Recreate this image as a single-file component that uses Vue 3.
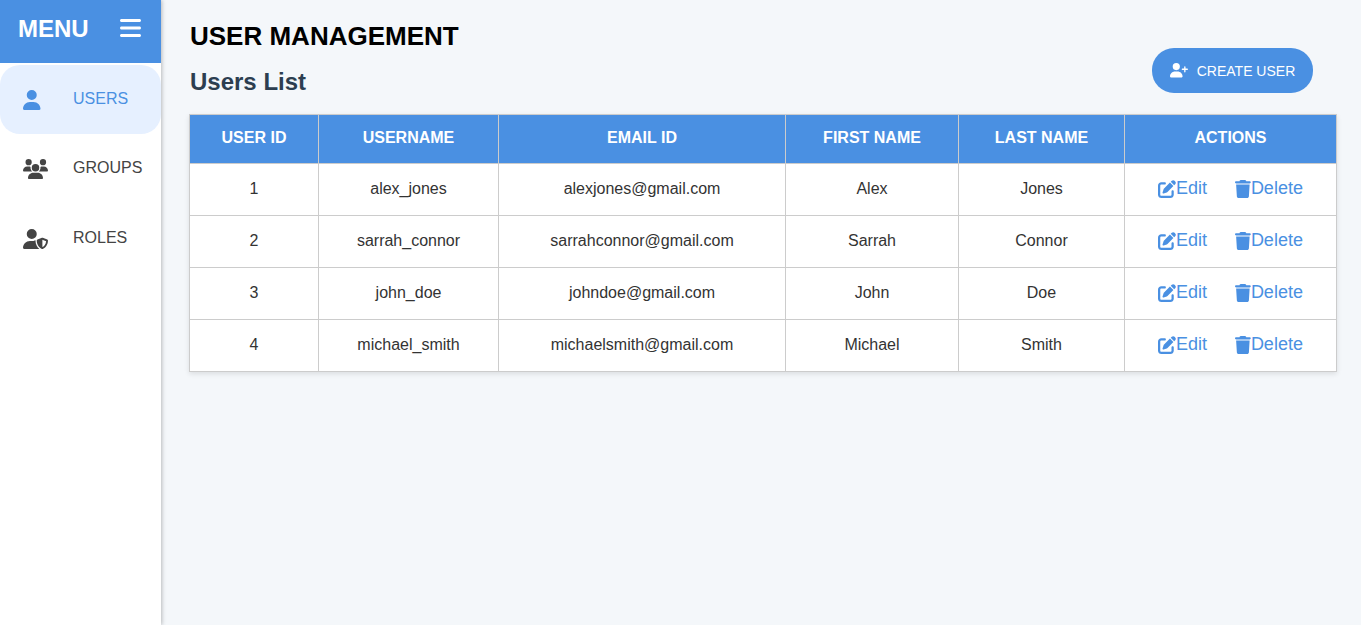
<script setup>
const icons = {
  user: { box: '0 0 448 512', d: 'M224 256A128 128 0 1 0 224 0a128 128 0 1 0 0 256zm-45.7 48C79.8 304 0 383.8 0 482.3C0 498.7 13.3 512 29.7 512H418.3c16.4 0 29.7-13.3 29.7-29.7C448 383.8 368.2 304 269.7 304H178.3z' },
  users: { box: '0 0 640 512', d: 'M144 0a80 80 0 1 1 0 160A80 80 0 1 1 144 0zM512 0a80 80 0 1 1 0 160A80 80 0 1 1 512 0zM0 298.7C0 239.8 47.8 192 106.7 192h42.7c15.9 0 31 3.5 44.6 9.7c-1.3 7.2-1.9 14.7-1.9 22.3c0 38.2 16.8 72.5 43.3 96c-.2 0-.4 0-.7 0H21.3C9.6 320 0 310.4 0 298.7zM405.3 320c-.2 0-.4 0-.7 0c26.6-23.5 43.3-57.8 43.3-96c0-7.6-.7-15-1.9-22.3c13.6-6.3 28.7-9.7 44.6-9.7h42.7C592.2 192 640 239.8 640 298.7c0 11.8-9.6 21.3-21.3 21.3H405.3zM224 224a96 96 0 1 1 192 0 96 96 0 1 1 -192 0zM128 485.3C128 411.7 187.7 352 261.3 352H378.7C452.3 352 512 411.7 512 485.3c0 14.7-11.9 26.7-26.7 26.7H154.7c-14.7 0-26.7-11.9-26.7-26.7z' },
  shield: { box: '0 0 640 512', d: 'M224 256A128 128 0 1 0 224 0a128 128 0 1 0 0 256zm-45.7 48C79.8 304 0 383.8 0 482.3C0 498.7 13.3 512 29.7 512H419.2c-54-42.9-99.2-116.7-99.2-216c0-2.5.8-4.7 1.1-7.2C304 294 287 304 269.7 304H178.3zM622.3 271.1l-115.2-45c-4.1-1.6-12.6-3.7-22.2 0l-115.2 45c-10.7 4.2-17.7 14-17.7 24.9 0 111.6 68.7 188.8 132.9 213.9 9.6 3.7 18 1.6 22.2 0C558.4 489.9 640 420.5 640 296c0-10.9-7-20.7-17.7-24.9zM496 462.4V273.3l95.5 37.3c-5.6 87.1-60.9 135.4-95.5 151.8z' },
  plus: { box: '0 0 640 512', d: 'M96 128a128 128 0 1 1 256 0A128 128 0 1 1 96 128zM0 482.3C0 383.8 79.8 304 178.3 304h91.4C368.2 304 448 383.8 448 482.3c0 16.4-13.3 29.7-29.7 29.7H29.7C13.3 512 0 498.7 0 482.3zM504 312V248H440c-13.3 0-24-10.7-24-24s10.7-24 24-24h64V136c0-13.3 10.7-24 24-24s24 10.7 24 24v64h64c13.3 0 24 10.7 24 24s-10.7 24-24 24H552v64c0 13.3-10.7 24-24 24s-24-10.7-24-24z' },
  edit: { box: '0 0 512 512', d: 'M471.6 21.7c-21.9-21.9-57.3-21.9-79.2 0L362.3 51.7l97.9 97.9 30.1-30.1c21.9-21.9 21.9-57.3 0-79.2L471.6 21.7zm-299.2 220c-6.1 6.1-10.8 13.6-13.5 21.9l-29.6 88.8c-2.9 8.6-.6 18.1 5.8 24.6s15.9 8.7 24.6 5.8l88.8-29.6c8.2-2.7 15.7-7.4 21.9-13.5L437.7 172.3 339.7 74.3 172.4 241.7zM96 64C43 64 0 107 0 160V416c0 53 43 96 96 96H352c53 0 96-43 96-96V320c0-17.7-14.3-32-32-32s-32 14.3-32 32v96c0 17.7-14.3 32-32 32H96c-17.7 0-32-14.3-32-32V160c0-17.7 14.3-32 32-32h96c17.7 0 32-14.3 32-32s-14.3-32-32-32H96z' },
  trash: { box: '0 0 448 512', d: 'M135.2 17.7L128 32H32C14.3 32 0 46.3 0 64S14.3 96 32 96H416c17.7 0 32-14.3 32-32s-14.3-32-32-32H320l-7.2-14.3C307.4 6.8 296.3 0 284.2 0H163.8c-12.1 0-23.2 6.8-28.6 17.7zM416 128H32L53.2 467c1.6 25.3 22.6 45 47.9 45H346.9c25.3 0 46.3-19.7 47.9-45L416 128z' },
  bars: { box: '0 0 448 512', d: 'M0 96C0 78.3 14.3 64 32 64H416c17.7 0 32 14.3 32 32s-14.3 32-32 32H32C14.3 128 0 113.7 0 96zM0 256c0-17.7 14.3-32 32-32H416c17.7 0 32 14.3 32 32s-14.3 32-32 32H32c-17.7 0-32-14.3-32-32zM448 416c0 17.7-14.3 32-32 32H32c-17.7 0-32-14.3-32-32s14.3-32 32-32H416c17.7 0 32 14.3 32 32z' },
}

const menu = [
  { label: 'USERS', icon: icons.user, active: true },
  { label: 'GROUPS', icon: icons.users },
  { label: 'ROLES', icon: icons.shield },
]

const columns = [
  { label: 'USER ID', width: 129 },
  { label: 'USERNAME', width: 180 },
  { label: 'EMAIL ID', width: 287 },
  { label: 'FIRST NAME', width: 173 },
  { label: 'LAST NAME', width: 166 },
  { label: 'ACTIONS', width: 212 },
]

const users = [
  { id: 1, username: 'alex_jones', email: 'alexjones@gmail.com', first: 'Alex', last: 'Jones' },
  { id: 2, username: 'sarrah_connor', email: 'sarrahconnor@gmail.com', first: 'Sarrah', last: 'Connor' },
  { id: 3, username: 'john_doe', email: 'johndoe@gmail.com', first: 'John', last: 'Doe' },
  { id: 4, username: 'michael_smith', email: 'michaelsmith@gmail.com', first: 'Michael', last: 'Smith' },
]
</script>

<template>
  <div class="page">
    <aside class="sidebar">
      <div class="brand">
        <span class="brand-name">MENU</span>
        <svg :viewBox="icons.bars.box" class="burger"><path :d="icons.bars.d" fill="currentColor" /></svg>
      </div>
      <nav class="nav">
        <a v-for="m in menu" :key="m.label" class="nav-item" :class="{ active: m.active }">
          <span class="nav-icon">
            <svg :viewBox="m.icon.box" class="nav-svg"><path :d="m.icon.d" fill="currentColor" /></svg>
          </span>
          <span class="nav-label">{{ m.label }}</span>
        </a>
      </nav>
    </aside>

    <main class="main">
      <div class="head">
        <div class="titles">
          <h1 class="title">USER MANAGEMENT</h1>
          <h2 class="subtitle">Users List</h2>
        </div>
        <button class="create">
          <svg :viewBox="icons.plus.box" class="create-svg"><path :d="icons.plus.d" fill="currentColor" /></svg>
          CREATE USER
        </button>
      </div>

      <table class="table">
        <colgroup>
          <col v-for="c in columns" :key="c.label" :width="c.width" />
        </colgroup>
        <thead>
          <tr>
            <th v-for="c in columns" :key="c.label">{{ c.label }}</th>
          </tr>
        </thead>
        <tbody>
          <tr v-for="u in users" :key="u.id">
            <td>{{ u.id }}</td>
            <td>{{ u.username }}</td>
            <td>{{ u.email }}</td>
            <td>{{ u.first }}</td>
            <td>{{ u.last }}</td>
            <td>
              <div class="actions">
                <a class="action">
                  <svg :viewBox="icons.edit.box" class="action-svg"><path :d="icons.edit.d" fill="currentColor" /></svg>Edit
                </a>
                <a class="action">
                  <svg :viewBox="icons.trash.box" class="action-svg"><path :d="icons.trash.d" fill="currentColor" /></svg>Delete
                </a>
              </div>
            </td>
          </tr>
        </tbody>
      </table>
    </main>
  </div>
</template>

<style>
html, body {
  margin: 0;
  background: #f4f7fa;
}
</style>

<style scoped>
.page {
  display: flex;
  min-height: 625px;
  font-family: "Liberation Sans", Arial, sans-serif;
}
.sidebar {
  width: 161px;
  flex: none;
  background: #fff;
  box-shadow: 1px 0 4px rgba(0, 0, 0, 0.25);
}
.brand {
  height: 63px;
  background: #4a90e2;
  color: #fff;
  display: flex;
  align-items: flex-start;
  justify-content: space-between;
  padding: 17px 20px 0 18px;
  box-sizing: border-box;
}
.brand-name {
  font-size: 24px;
  font-weight: 700;
  line-height: 24px;
}
.burger {
  height: 24px;
  margin-top: -1px;
}
.nav {
  padding-top: 2px;
}
.nav-item {
  height: 70px;
  display: flex;
  align-items: center;
  padding-left: 23px;
  font-size: 16px;
  color: #444;
  border-radius: 20px;
}
.nav-item.active {
  height: 69px;
  background: #e6f0ff;
  color: #4a90e2;
}
.nav-icon {
  width: 50px;
  display: flex;
}
.nav-svg {
  height: 20px;
}
.nav-label {
  position: relative;
  top: -1px;
}
.main {
  flex: 1;
  padding: 20px 24px 0 28px;
  min-width: 0;
}
.head {
  display: flex;
  justify-content: space-between;
  align-items: flex-start;
  padding-right: 24px;
}
.titles {
  padding-left: 1px;
}
.title {
  margin: 1px 0 0;
  font-size: 26px;
  line-height: 30px;
  color: #000;
}
.subtitle {
  margin: 17px 0 0;
  font-size: 24px;
  line-height: 27px;
  color: #2c3e50;
}
.create {
  margin-top: 28px;
  width: 161px;
  height: 45px;
  border: 0;
  border-radius: 22px;
  background: #4a90e2;
  color: #fff;
  font-family: inherit;
  font-size: 14px;
  display: flex;
  align-items: center;
  justify-content: center;
  gap: 9px;
  padding: 0;
}
.create-svg {
  height: 14.4px;
}
.table {
  width: 1147px;
  margin-top: 19px;
  border-collapse: collapse;
  table-layout: fixed;
  background: #fff;
  box-shadow: 0 2px 5px rgba(0, 0, 0, 0.1);
}
th,
td {
  border: 1px solid #ccc;
  text-align: center;
  padding: 0 0 2px;
}
th {
  height: 46px;
  background: #4a90e2;
  color: #fff;
  font-size: 16px;
  font-weight: 700;
}
td {
  height: 49px;
  font-size: 16px;
  color: #333;
}
.actions {
  display: flex;
  justify-content: center;
  gap: 28px;
}
.action {
  display: inline-flex;
  align-items: center;
  font-size: 18px;
  color: #4a90e2;
}
.action-svg {
  height: 18px;
}
</style>
